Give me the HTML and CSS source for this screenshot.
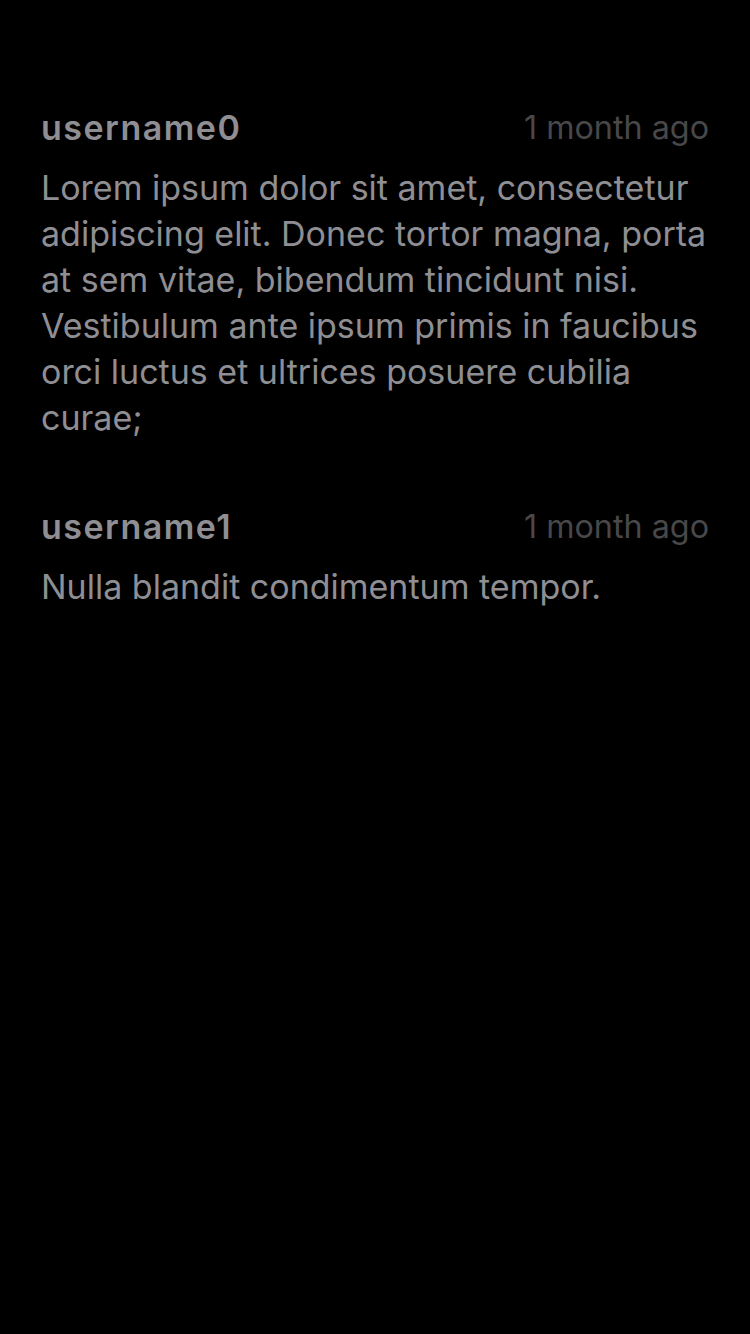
FILE: index.html
```html
<!DOCTYPE html>
<html>
<head>
<meta charset="utf-8">
<link rel="stylesheet" href="styles.css">
</head>
<body>
<main class="comments">
  <article class="comment">
    <header class="comment-head">
      <span class="user">username0</span>
      <span class="time">1 month ago</span>
    </header>
    <p class="text">Lorem ipsum dolor sit amet, consectetur adipiscing elit. Donec tortor magna, porta at sem vitae, bibendum tincidunt nisi. Vestibulum ante ipsum primis in faucibus orci luctus et ultrices posuere cubilia curae;</p>
  </article>
  <article class="comment">
    <header class="comment-head">
      <span class="user">username1</span>
      <span class="time">1 month ago</span>
    </header>
    <p class="text">Nulla blandit condimentum tempor.</p>
  </article>
</main>
</body>
</html>
```
FILE: styles.css
```css
html, body {
  margin: 0;
  padding: 0;
  background: #000;
  width: 750px;
  height: 1334px;
}
body {
  font-family: Inter, "Liberation Sans", sans-serif;
  -webkit-font-smoothing: antialiased;
}
.comments {
  display: flex;
  flex-direction: column;
  gap: 62px;
  padding: 104px 41px 0 41px;
}
.comment {
  display: flex;
  flex-direction: column;
  gap: 15px;
}
.comment-head {
  display: flex;
  justify-content: space-between;
  align-items: center;
  height: 46px;
}
.user {
  font-size: 34px;
  font-weight: 600;
  color: #8e8e93;
  letter-spacing: 1.5px;
}
.time {
  font-size: 32.3px;
  color: #48484a;
  letter-spacing: 0;
}
.text {
  margin: 0;
  font-size: 34px;
  line-height: 46px;
  color: #8e8e93;
  letter-spacing: 0;
}
```
